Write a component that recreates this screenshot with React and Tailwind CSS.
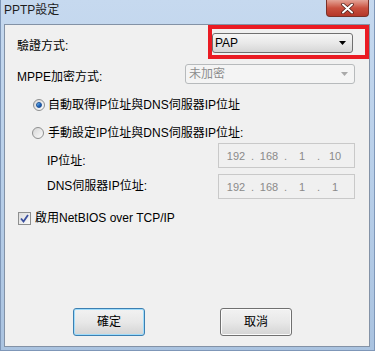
import React from "react";

const font = "font-['Liberation_Sans','Noto_Sans_CJK_TC',sans-serif]";

const Arrow = ({ color }) => (
  <svg width="7" height="4" viewBox="0 0 7 4">
    <path d="M0 0 H7 L3.5 4 Z" fill={color} />
  </svg>
);

const Radio = ({ checked }) => (
  <span className="w-[12px] h-[12px] rounded-full border border-[#8e8f8f] bg-gradient-to-br from-[#d6d6d6] to-[#fbfbfb] flex items-center justify-center shrink-0">
    {checked && (
      <span className="w-[6px] h-[6px] rounded-full bg-gradient-to-br from-[#8ad0f8] via-[#2a73c6] to-[#0c3f93] border border-[#1b4f95]" />
    )}
  </span>
);

const IpBox = ({ parts }) => (
  <div className="w-[137px] h-[25px] mr-[14px] border border-[#c9c9c9] bg-[#f0f0f0] flex items-center pl-[5px] text-[11px] text-[#8a8a8a]">
    {parts.map((p, i) => (
      <React.Fragment key={i}>
        <span className="w-[24px] text-center">{p}</span>
        {i < 3 && <span className="w-[9px] text-center">.</span>}
      </React.Fragment>
    ))}
  </div>
);

const Button = ({ label, primary }) => (
  <button
    className={
      "w-[72px] h-[28px] rounded-[3px] border text-[12px] text-black bg-gradient-to-b from-[#f2f2f2] via-[#e8e8e8] to-[#d4d4d4] " +
      (primary
        ? "border-[#3c7fb1] shadow-[inset_0_0_0_1px_#9fdcfb]"
        : "border-[#707070] shadow-[inset_0_0_0_1px_#fbfbfb]")
    }
  >
    {label}
  </button>
);

export default function App() {
  return (
    <div className={"w-[375px] h-[351px] flex flex-col bg-gradient-to-b from-[#c6d9ef] via-[#b8cfe9] to-[#aac3e0] border-x border-b border-[#7f97b8] " + font}>
      {/* title bar */}
      <div className="h-[24px] flex items-start justify-between pr-[5px] shrink-0">
        <span className="pl-[3px] pt-[2px] text-[12px] leading-4 text-[#1e1e1e]">PPTP設定</span>
        <div className="w-[43px] h-[17px] rounded-b-[4px] border border-t-0 border-[#7a3128] bg-gradient-to-b from-[#e3a397] via-[#c9503f] to-[#b5372a] flex items-center justify-center">
          <svg width="13" height="11" viewBox="0 0 13 11">
            <path d="M2 1.5 L11 9.5 M11 1.5 L2 9.5" stroke="#4a1a14" strokeWidth="3.4" strokeLinecap="round" />
            <path d="M2 1.5 L11 9.5 M11 1.5 L2 9.5" stroke="#ffffff" strokeWidth="2" strokeLinecap="round" />
          </svg>
        </div>
      </div>

      {/* client area */}
      <div className="flex-1 ml-[3px] mr-[4px] mb-[3px] border border-[#8392a6] bg-[#f0f0f0] flex flex-col text-[12px] leading-4 text-black">
        {/* 驗證方式 */}
        <div className="h-[34px] flex items-start">
          <span className="pl-[12px] pt-[13px]">驗證方式:</span>
          <div className="ml-auto w-[161px] h-[34px] border-[4px] border-[#ea1b23]">
            <div className="mt-[4px] w-[141px] h-[20px] rounded-[3px] border border-[#707070] bg-gradient-to-b from-[#f6f6f6] via-[#e9e9e9] to-[#d6d6d6] flex items-center justify-between pl-[2px] pr-[6px]">
              <span>PAP</span>
              <Arrow color="#000" />
            </div>
          </div>
        </div>

        {/* MPPE */}
        <div className="mt-[5px] h-[20px] flex items-start">
          <span className="pl-[12px] pt-[5px]">MPPE加密方式:</span>
          <div className="ml-auto mr-[14px] w-[170px] h-[20px] rounded-[3px] border border-[#b7babc] bg-[#f4f4f4] flex items-center justify-between pl-[3px] pr-[6px] text-[#8d8d8d]">
            <span>未加密</span>
            <Arrow color="#a9a9a9" />
          </div>
        </div>

        {/* radios */}
        <div className="mt-[13px] h-[16px] flex items-center pl-[28px] gap-[3px]">
          <Radio checked />
          <span>自動取得IP位址與DNS伺服器IP位址</span>
        </div>
        <div className="mt-[12px] h-[16px] flex items-center pl-[27px] gap-[4px]">
          <Radio />
          <span>手動設定IP位址與DNS伺服器IP位址:</span>
        </div>

        {/* IP */}
        <div className="mt-[2px] flex items-start">
          <span className="pl-[42px] pt-[10px]">IP位址:</span>
          <div className="ml-auto">
            <IpBox parts={["192", "168", "1", "10"]} />
          </div>
        </div>
        <div className="mt-[5px] flex items-start">
          <span className="pl-[42px] pt-[4px]">DNS伺服器IP位址:</span>
          <div className="ml-auto">
            <IpBox parts={["192", "168", "1", "1"]} />
          </div>
        </div>

        {/* NetBIOS */}
        <div className="mt-[11px] h-[16px] flex items-center pl-[13px] gap-[4px]">
          <span className="w-[13px] h-[13px] border border-[#8e8f8f] bg-gradient-to-br from-[#dcdcdc] to-[#fbfbfb] flex items-center justify-center shrink-0">
            <svg width="9" height="9" viewBox="0 0 9 9">
              <path d="M1 4.5 L3.5 7.5 L8 1" fill="none" stroke="#3a4f9e" strokeWidth="1.8" />
            </svg>
          </span>
          <span>啟用NetBIOS over TCP/IP</span>
        </div>

        {/* buttons */}
        <div className="mt-[82px] flex pl-[68px] gap-[75px]">
          <Button label="確定" primary />
          <Button label="取消" />
        </div>
      </div>
    </div>
  );
}
